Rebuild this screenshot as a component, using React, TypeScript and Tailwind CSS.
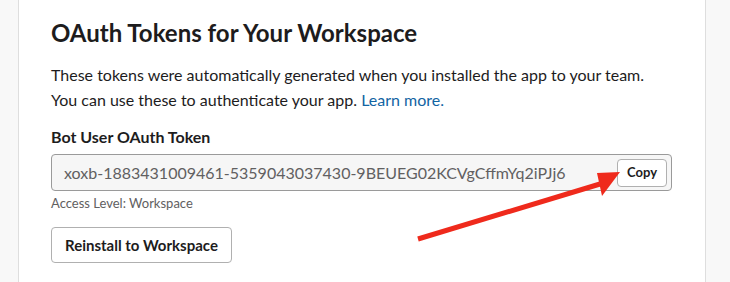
export default function App() {
  return (
    <div className="relative flex h-[282px] w-[730px] overflow-hidden bg-[#f8f8f8] font-['Lato','Liberation_Sans',sans-serif] text-[#1d1c1d]">
      <div className="w-[18px] shrink-0" />
      <div className="w-[688px] shrink-0 border-x border-[#dedede] bg-white pl-[32px] pt-[17px]">
        <h2 className="text-[24px] font-bold leading-[32px]">OAuth Tokens for Your Workspace</h2>
        <p className="mt-[13px] text-[16px] leading-[25px]">
          These tokens were automatically generated when you installed the app to your team.
          <br />
          You can use these to authenticate your app.{' '}
          <a className="text-[#1264a3]">Learn more.</a>
        </p>
        <div className="mt-[15px] text-[16px] font-bold leading-[20px]">Bot User OAuth Token</div>
        <div className="mt-[7px] flex h-[37px] w-[621px] items-center justify-between rounded-[4px] border border-[#9a9a9a] bg-[#f6f6f6] pl-[12px] pr-[4px]">
          <span className="text-[16px] text-[#616061]">xoxb-1883431009461-5359043037430-9BEUEG02KCVgCffmYq2iPJj6</span>
          <button className="h-[28px] rounded-[4px] border border-[#b0b0b0] bg-white px-[9px] text-[13px] font-bold text-[#1d1c1d]">
            Copy
          </button>
        </div>
        <div className="mt-[4px] text-[13px] leading-[16px] text-[#616061]">Access Level: Workspace</div>
        <button className="mt-[16px] h-[36px] rounded-[4px] border border-[#b0b0b0] bg-white px-[13px] text-[15px] font-bold">
          Reinstall to Workspace
        </button>
      </div>
      <svg className="absolute left-0 top-0" width="730" height="282" viewBox="0 0 730 282">
        <line x1="418" y1="239" x2="600" y2="184" stroke="#ef2a1c" strokeWidth="5" strokeLinecap="butt" />
        <polygon points="620,172 597,173 602,196" fill="#ef2a1c" />
      </svg>
    </div>
  );
}
